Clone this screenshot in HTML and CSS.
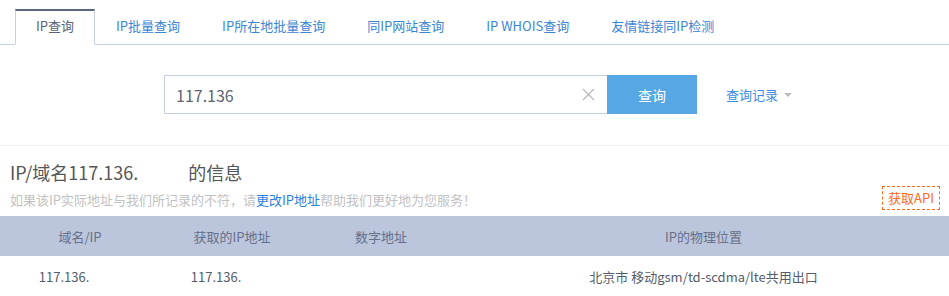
FILE: index.html
```html
<!DOCTYPE html>

<html>
    <head>
        <meta charset="utf-8">

        <link rel="stylesheet" href="styles.css">
    </head>

    <body>
        <div class="tabs">
            <div class="tab active">IP查询</div>
            <div class="tab">IP批量查询</div>
            <div class="tab">IP所在地批量查询</div>
            <div class="tab">同IP网站查询</div>
            <div class="tab">IP WHOIS查询</div>
            <div class="tab">友情链接同IP检测</div>
        </div>

        <div class="search">
            <div class="field">
                <span class="value">117.136</span>

                <svg class="clear" width="13" height="13" viewBox="0 0 13 13">
                    <path d="M1 1 L12 12 M12 1 L1 12" stroke="#b8b8b8" stroke-width="1.2" fill="none"/>
                </svg>
            </div>

            <button class="btn">查询</button>

            <div class="record">
                查询记录
                <span class="caret"></span>
            </div>
        </div>

        <div class="info">
            <div class="title">
                IP/域名117.136.<span class="mask title-mask"></span>的信息
            </div>

            <div class="tip-row">
                <div class="tip">
                    如果该IP实际地址与我们所记录的不符，请<span class="link">更改IP地址</span>帮助我们更好地为您服务！
                </div>

                <div class="api">获取API</div>
            </div>
        </div>

        <table class="result">
            <tr class="head">
                <td class="c1">域名/IP</td>
                <td class="c2">获取的IP地址</td>
                <td class="c3">数字地址</td>
                <td class="c4">IP的物理位置</td>
            </tr>

            <tr class="row">
                <td>117.136.<span class="mask cell-mask"></span></td>
                <td>117.136.<span class="mask cell-mask"></span></td>
                <td></td>
                <td>北京市 移动gsm/td-scdma/lte共用出口</td>
            </tr>
        </table>
    </body>
</html>
```

FILE: styles.css
```css
body
{
    margin: 0;
    background: white;
    font-family: "Noto Sans CJK SC", "Noto Sans", sans-serif;
    color: #555;
}

.tabs
{
    display: flex;
    align-items: flex-end;
    padding-top: 9px;
    padding-left: 15px;
    border-bottom: 1px solid #c6cee0;
}

.tab
{
    padding: 0 20px 3px 20px;
    line-height: 30px;
    font-size: 13px;
    color: #3a86d5;
    border: 1px solid transparent;
    border-top-width: 2px;
    margin-bottom: -1px;
}

.tab.active
{
    color: #5a6275;
    border-color: #c6cee0;
    border-top-color: #5b6680;
    border-bottom-color: white;
    background: white;
}

.search
{
    display: flex;
    align-items: center;
    margin-top: 30px;
    padding-left: 164px;
    padding-bottom: 31px;
    border-bottom: 1px solid #f0f0f0;
}

.field
{
    display: flex;
    align-items: center;
    justify-content: space-between;
    box-sizing: border-box;
    width: 443px;
    height: 39px;
    padding: 0 12px 0 11px;
    border: 1px solid #c6cee0;
    border-right: none;
}

.value
{
    font-size: 16px;
    color: #5d6474;
}

.btn
{
    width: 90px;
    height: 39px;
    border: none;
    background: #56a7e3;
    color: white;
    font-size: 14px;
    font-family: "Noto Sans CJK SC", "Noto Sans", sans-serif;
}

.record
{
    display: flex;
    align-items: center;
    margin-left: 29px;
    font-size: 13px;
    color: #3a8ae6;
}

.caret
{
    margin-left: 6px;
    border-left: 4px solid transparent;
    border-right: 4px solid transparent;
    border-top: 4px solid #bbb;
}

.info
{
    padding: 0 9px 0 10px;
}

.title
{
    margin-top: 15px;
    line-height: 22px;
    font-size: 18px;
    color: #555;
}

.mask
{
    display: inline-block;
}

.title-mask
{
    width: 50px;
}

.tip-row
{
    display: flex;
    justify-content: space-between;
    align-items: flex-end;
    margin-top: 3px;
}

.tip
{
    line-height: 20px;
    font-size: 13px;
    color: #c2c2c2;
}

.link
{
    color: #2b7fe2;
}

.api
{
    padding: 0 5px;
    line-height: 22px;
    font-size: 13px;
    color: #ff6a1a;
    border: 1px dashed #ff6a1a;
}

.result
{
    width: 100%;
    margin-top: 6px;
    border-collapse: collapse;
    font-size: 13px;
}

.result td
{
    height: 40px;
    padding: 0;
    text-align: center;
}

.head td
{
    background: #bbc6dd;
    color: #66708a;
}

.row td
{
    color: #555c6a;
}

.c1
{
    width: 160px;
}

.c2
{
    width: 144px;
}

.c3
{
    width: 154px;
}

.cell-mask
{
    width: 32px;
}
```
